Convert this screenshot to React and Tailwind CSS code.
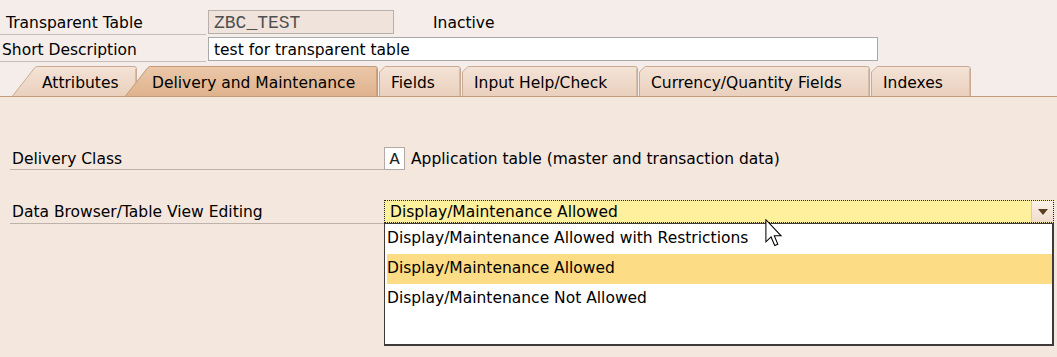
import React from "react";

function Tab({ width, label, active, variant, textPad, id }) {
  const h = 30;
  const w = width;
  let d;
  if (variant === "slant") {
    d = `M0.5,${h} L22.5,2 Q23.5,0.5 25.5,0.5 L${w - 3},0.5 Q${w - 0.5},0.5 ${w - 0.5},3 L${w - 0.5},${h}`;
  } else {
    d = `M0.5,${h} L0.5,6 L6,0.5 L${w - 3},0.5 Q${w - 0.5},0.5 ${w - 0.5},3 L${w - 0.5},${h}`;
  }
  return (
    <div className="relative h-full shrink-0" style={{ width: w }}>
      <svg className="absolute inset-0" width={w} height={h} viewBox={`0 0 ${w} ${h}`}>
        <defs>
          <linearGradient id={id} x1="0" y1="0" x2="0" y2="1">
            {active ? (
              <>
                <stop offset="0" stopColor="#ebc8a9" />
                <stop offset="1" stopColor="#dfb28d" />
              </>
            ) : (
              <>
                <stop offset="0" stopColor="#f4e3d7" />
                <stop offset="1" stopColor="#ead0bd" />
              </>
            )}
          </linearGradient>
        </defs>
        <path d={d + " Z"} fill={`url(#${id})`} stroke="none" />
        <path d={d} fill="none" stroke={active ? "#c39a78" : "#c9ab93"} strokeWidth="1" />
        <line x1={w - 1.5} y1="3" x2={w - 1.5} y2={h} stroke={active ? "#cfa07c" : "#d8bba5"} strokeWidth="1" />
      </svg>
      <div
        className="relative flex h-full items-center pt-[5px] text-black"
        style={{ paddingLeft: textPad }}
      >
        {label}
      </div>
    </div>
  );
}

function Cursor() {
  return (
    <svg width="20" height="28" viewBox="0 0 12 19" className="absolute" style={{ left: 764, top: 219 }}>
      <path
        d="M0.5,0.5 L0.5,15.5 L4,12.2 L6.5,18 L8.6,17.1 L6.2,11.4 L10.8,11.4 Z"
        fill="#ffffff"
        stroke="#000000"
        strokeWidth="0.7"
        strokeLinejoin="miter"
      />
    </svg>
  );
}

export default function App() {
  return (
    <div
      className="relative flex h-[357px] w-[1057px] flex-col overflow-hidden bg-[#f4ede9] text-[15.5px] leading-none text-black"
      style={{ fontFamily: '"DejaVu Sans", Verdana, sans-serif' }}
    >
      {/* Header rows */}
      <div className="pt-[10px]">
        <div className="flex h-[25px] items-stretch">
          <div className="flex w-[206px] items-center border-b border-[#c6bcb7] pl-[6px] pt-[4px]">
            Transparent Table
          </div>
          <div
            className="ml-[2px] flex h-[24px] w-[186px] items-center border border-[#b9b0ab] bg-[#efe3dc] pl-[5px] pt-[2px] text-[18px] text-[#505050]"
            style={{ fontFamily: '"Liberation Mono", "Courier New", monospace' }}
          >
            ZBC_TEST
          </div>
          <div className="ml-[39px] flex items-center pt-[3px]">Inactive</div>
        </div>
        <div className="mt-[2px] flex h-[25px] items-stretch">
          <div className="flex w-[206px] items-center border-b border-[#c6bcb7] pl-[2px] pt-[4px]">
            Short Description
          </div>
          <div className="ml-[2px] flex h-[24px] w-[670px] items-center border border-[#a9a9a9] bg-white pl-[5px] pt-[3px]">
            test for transparent table
          </div>
        </div>
      </div>

      {/* Tabs */}
      <div className="mt-[4px] flex h-[30px] items-end">
        <div className="w-[12px] shrink-0" />
        <Tab id="t1" width={125} label="Attributes" variant="slant" textPad={30} />
        <div className="-ml-[12px] flex h-full">
          <Tab id="t2" width={253} label="Delivery and Maintenance" variant="slant" active textPad={27} />
        </div>
        <div className="ml-[1px] flex h-full">
          <Tab id="t3" width={82} label="Fields" variant="cut" textPad={12} />
        </div>
        <div className="ml-[1px] flex h-full">
          <Tab id="t4" width={176} label="Input Help/Check" variant="cut" textPad={12} />
        </div>
        <div className="ml-[1px] flex h-full">
          <Tab id="t5" width={231} label="Currency/Quantity Fields" variant="cut" textPad={12} />
        </div>
        <div className="ml-[1px] flex h-full">
          <Tab id="t6" width={100} label="Indexes" variant="cut" textPad={12} />
        </div>
      </div>
      <div className="h-[1px] bg-[#c49c79]" />

      {/* Panel */}
      <div className="flex-1 bg-[#f4e7de] pt-[49px]">
        <div className="flex h-[24px] items-stretch">
          <div className="ml-[10px] flex w-[374px] items-center border-b border-[#bdb2ac] pl-[2px] pt-[4px]">
            Delivery Class
          </div>
          <div
            className="mt-[1px] flex h-[23px] w-[21px] items-center justify-center border border-[#b3aaa5] bg-white pt-[1px] text-[17px] text-[#222]"
            style={{ fontFamily: '"Liberation Mono", "Courier New", monospace' }}
          >
            A
          </div>
          <div className="ml-[6px] flex items-center pt-[3px]">
            Application table (master and transaction data)
          </div>
        </div>

        <div className="mt-[30px] flex h-[24px] items-stretch">
          <div className="ml-[10px] flex w-[374px] items-center border-b border-[#bdb2ac] pl-[2px] pt-[3px]">
            Data Browser/Table View Editing
          </div>
          <div className="relative h-[23px] w-[670px]">
            <div className="flex h-full border border-dotted border-[#222] bg-[#fff09e]">
              <div className="flex flex-1 items-center pl-[5px] pt-[2px]">
                Display/Maintenance Allowed
              </div>
              <div className="flex w-[22px] items-center justify-center border-l border-[#d9c8b8] bg-gradient-to-b from-[#fbf1ea] to-[#efdccd]">
                <svg width="12" height="8" viewBox="0 0 12 8">
                  <path d="M1,1 L11,1 L6,7 Z" fill="#5a3f1c" />
                </svg>
              </div>
            </div>
            {/* listbox overlay */}
            <div className="absolute left-0 top-[23px] z-10 h-[123px] w-[670px] border border-r-2 border-b-2 border-[#3f3b3a] bg-white pl-[2px] pt-0">
              <div className="flex h-[30px] items-center">
                Display/Maintenance Allowed with Restrictions
              </div>
              <div className="flex h-[30px] items-center bg-[#fcdc84]">
                Display/Maintenance Allowed
              </div>
              <div className="flex h-[30px] items-center">
                Display/Maintenance Not Allowed
              </div>
            </div>
          </div>
        </div>
      </div>

      <div className="absolute inset-0 z-20 pointer-events-none">
        <Cursor />
      </div>
    </div>
  );
}
